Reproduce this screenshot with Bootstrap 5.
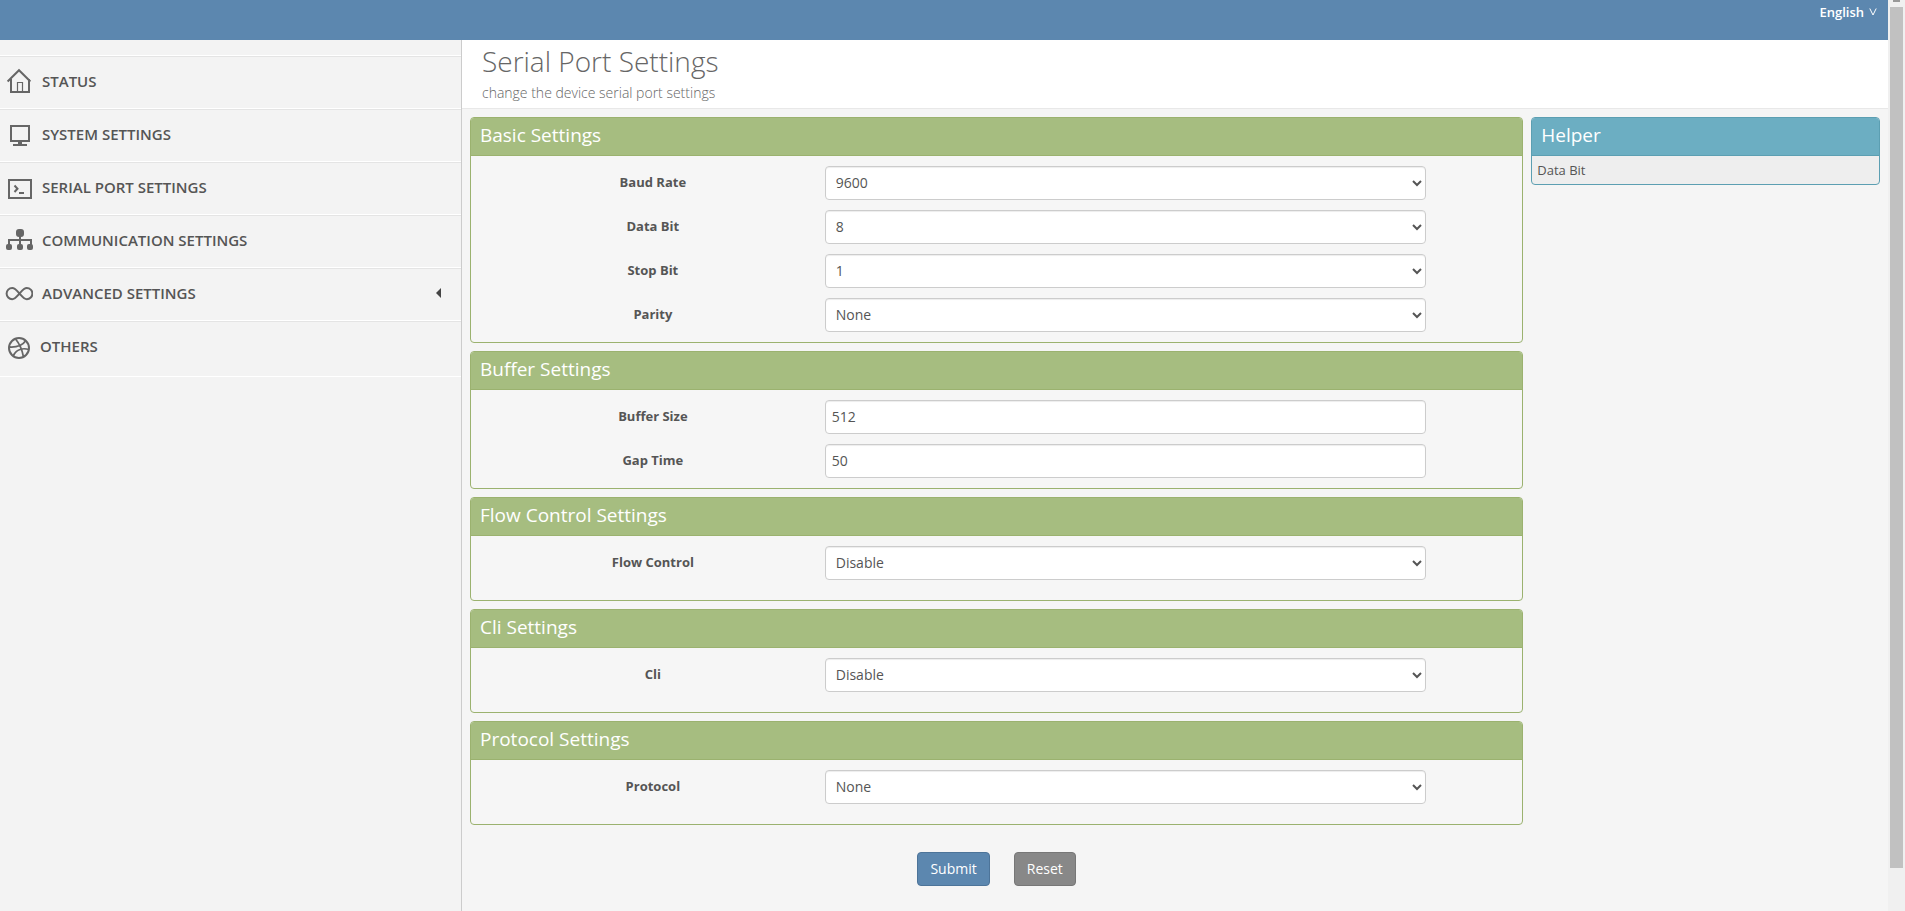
<!DOCTYPE html>
<html lang="en">
<head>
<meta charset="utf-8">
<meta name="viewport" content="width=device-width, initial-scale=1">
<title>Serial Port Settings</title>
<link href="https://cdn.jsdelivr.net/npm/bootstrap@5.3.0/dist/css/bootstrap.min.css" rel="stylesheet">
<style>
body { font-family: "Open Sans", "Noto Sans", sans-serif; font-size: 14px; line-height: 20px; color: #555; background: #f5f5f5; }
.topbar { background: #5c87af; height: 40px; padding: 2px 11px; }
.lang { color: #fff; font-size: 13px; font-weight: 600; gap: 5px; }
.sidebar { width: 24.47%; background: #f3f3f3; border-right: 1px solid #ccc; padding-top: 15px; }
.sidebar ul { border-top: 1px solid #fff; }
.side-link { height: 53px; padding: 0 20px 3px 5px; gap: 9px; border-top: 1px solid #e4e4e4; border-bottom: 1px solid #fff; color: #555; font-weight: 600; font-size: 15px; text-transform: uppercase; }
.side-link svg { width: 28px; height: 28px; flex: none; color: #666; }
.side-link.tall { height: 56px; padding-bottom: 6px; gap: 7px; }
.side-link .caret { width: 5px; height: 10px; }
.page-head { background: #fff; border-bottom: 1px solid #e8e8e8; height: 69px; padding: 0 20px; }
.page-head h1 { font-size: 28px; line-height: 43px; font-weight: 300; color: #666; margin: 0; }
.page-head p { font-size: 14px; line-height: 20px; font-weight: 300; color: #666; margin: 0; }
.main-wrap { padding: 8px; gap: 8px; }
.forms { width: 74.7%; }
.panel { border: 1px solid #9bb26f; border-radius: 4px; background: #f6f6f6; margin-bottom: 8px; overflow: hidden; }
.panel-title { font-size: 19px; line-height: 24px; font-weight: 400; color: #fff; background: #a6bd80; border-bottom: 1px solid #9bb26f; margin: 0; padding: 5px 9px 8px; }
.panel-fields { padding: 10px 10px 0; }
.panel-fields.roomy { padding-bottom: 10px; }
.field-row { margin-bottom: 10px; }
.field-row label { font-weight: 700; font-size: 13px; line-height: 32px; }
.field-box { display: block; width: 100%; height: 34px; padding: 5px 6px 7px; font-size: 14px; line-height: 20px; color: #555; background-color: #fff; border: 1px solid #ccc; border-radius: 4px; box-shadow: inset 0 1px 1px rgba(0,0,0,.075); }
.helper { border-color: #5c9fb2; background: #eee; }
.helper .panel-title { background: #6caec2; border-color: #5c9fb2; }
.helper p { margin: 0; padding: 4px 5px; font-size: 13px; }
.actions { gap: 24px; padding-top: 19px; }
.actions .btn { font-size: 14px; line-height: 20px; padding: 6px 12px; border-radius: 4px; color: #fff; }
.btn-send { background: #5c87af; border-color: #4d7499; }
.btn-clear { background: #888; border-color: #777; }
.scroll-track { width: 17px; background: #f0f0f0; }
.scroll-track i { width: 7px; height: 2px; background: #999; margin-bottom: 5px; }
.scroll-track b { width: 13px; height: 94.5%; background: #c1c1c1; }
</style>
</head>
<body>
<div class="d-flex min-vh-100">
  <div class="d-flex flex-column flex-grow-1">
    <header class="topbar d-flex justify-content-end align-items-start">
      <a href="#" class="lang d-flex align-items-center text-decoration-none">English
        <svg width="8" height="8" viewBox="0 0 8 8" fill="none" stroke="#fff" aria-hidden="true"><path d="M.8 .5 4 7 7.2 .5"/></svg>
      </a>
    </header>
    <div class="d-flex flex-grow-1">
      <nav class="sidebar flex-shrink-0">
        <ul class="list-unstyled m-0">
          <li><a href="#" class="side-link d-flex align-items-center text-decoration-none">
            <svg viewBox="0 0 28 28" fill="none" stroke="currentColor" stroke-width="2"><path d="M2.600 14.500 14 3.200 25.400 14.500M6 12V25H24V12"/><path stroke-width="1.200" d="M12.500 25V15.500H17.500V25"/></svg>
            Status</a></li>
          <li><a href="#" class="side-link d-flex align-items-center text-decoration-none">
            <svg viewBox="0 0 28 28" fill="none" stroke="currentColor" stroke-width="2"><path d="M6 6H24V21H6ZM8 25H22"/><path stroke-width="4" d="M15 21V25"/></svg>
            System Settings</a></li>
          <li><a href="#" class="side-link d-flex align-items-center text-decoration-none">
            <svg viewBox="0 0 28 28" fill="none" stroke="currentColor" stroke-width="2"><path d="M4 7H26V25H4ZM9.500 12.500 12.500 15.700 9.500 19M14 20H19"/></svg>
            Serial Port Settings</a></li>
          <li><a href="#" class="side-link d-flex align-items-center text-decoration-none">
            <svg viewBox="0 0 28 28" fill="currentColor"><rect x="11" y="3" width="8" height="8" rx="3"/><rect x="1" y="18" width="6" height="6" rx="2"/><rect x="12" y="18" width="6" height="6" rx="2"/><rect x="22" y="18" width="6" height="6" rx="2"/><path d="M15 10V19M4 19V14H26V19" fill="none" stroke="currentColor" stroke-width="2"/></svg>
            Communication Settings</a></li>
          <li><a href="#" class="side-link d-flex align-items-center text-decoration-none">
            <svg viewBox="0 0 28 28" fill="none" stroke="currentColor" stroke-width="2"><path d="M14.500 14.500C11.500 11 10 9 7.200 9A5.600 5.600 0 0 0 7.200 20.200C10 20.200 11.500 18 14.500 14.500S19 9 21.800 9A5.600 5.600 0 0 1 21.800 20.200C19 20.200 17.500 18 14.500 14.500Z"/></svg>
            <span class="flex-grow-1">Advanced Settings</span>
            <svg class="caret" viewBox="0 0 5 10" fill="#444"><path d="M5 0V10L0 5Z"/></svg></a></li>
          <li><a href="#" class="side-link tall d-flex align-items-center text-decoration-none">
            <svg viewBox="0 0 28 28" fill="none" stroke="currentColor" stroke-width="2"><circle cx="14" cy="16" r="10"/><path stroke-width="1.800" d="M10.500 7C14 11 17 17 18.500 25M4 15C11 15.500 17 14 20.500 9M8 24C11 18 17 15.500 24 17.500"/></svg>
            Others</a></li>
        </ul>
      </nav>
      <main class="flex-grow-1">
        <div class="page-head">
          <h1>Serial Port Settings</h1>
          <p>change the device serial port settings</p>
        </div>
        <div class="main-wrap d-flex align-items-start">
          <form class="forms" onsubmit="return false">
            <section class="panel">
              <h2 class="panel-title">Basic Settings</h2>
              <div class="panel-fields">
                <div class="field-row row g-0"><label for="baud" class="col-4 text-center">Baud Rate</label><div class="col-7"><select id="baud" class="field-box"><option>9600</option></select></div></div>
                <div class="field-row row g-0"><label for="databit" class="col-4 text-center">Data Bit</label><div class="col-7"><select id="databit" class="field-box"><option>8</option></select></div></div>
                <div class="field-row row g-0"><label for="stopbit" class="col-4 text-center">Stop Bit</label><div class="col-7"><select id="stopbit" class="field-box"><option>1</option></select></div></div>
                <div class="field-row row g-0"><label for="parity" class="col-4 text-center">Parity</label><div class="col-7"><select id="parity" class="field-box"><option>None</option></select></div></div>
              </div>
            </section>
            <section class="panel">
              <h2 class="panel-title">Buffer Settings</h2>
              <div class="panel-fields">
                <div class="field-row row g-0"><label for="buffer" class="col-4 text-center">Buffer Size</label><div class="col-7"><input id="buffer" type="text" class="field-box" value="512"></div></div>
                <div class="field-row row g-0"><label for="gap" class="col-4 text-center">Gap Time</label><div class="col-7"><input id="gap" type="text" class="field-box" value="50"></div></div>
              </div>
            </section>
            <section class="panel">
              <h2 class="panel-title">Flow Control Settings</h2>
              <div class="panel-fields roomy">
                <div class="field-row row g-0"><label for="flow" class="col-4 text-center">Flow Control</label><div class="col-7"><select id="flow" class="field-box"><option>Disable</option></select></div></div>
              </div>
            </section>
            <section class="panel">
              <h2 class="panel-title">Cli Settings</h2>
              <div class="panel-fields roomy">
                <div class="field-row row g-0"><label for="cli" class="col-4 text-center">Cli</label><div class="col-7"><select id="cli" class="field-box"><option>Disable</option></select></div></div>
              </div>
            </section>
            <section class="panel">
              <h2 class="panel-title">Protocol Settings</h2>
              <div class="panel-fields roomy">
                <div class="field-row row g-0"><label for="protocol" class="col-4 text-center">Protocol</label><div class="col-7"><select id="protocol" class="field-box"><option>None</option></select></div></div>
              </div>
            </section>
            <div class="actions d-flex justify-content-center">
              <button type="submit" class="btn btn-send">Submit</button>
              <button type="reset" class="btn btn-clear">Reset</button>
            </div>
          </form>
          <aside class="panel helper flex-grow-1">
            <h2 class="panel-title">Helper</h2>
            <p>Data Bit</p>
          </aside>
        </div>
      </main>
    </div>
  </div>
  <div class="scroll-track d-flex flex-column align-items-center flex-shrink-0 vh-100" aria-hidden="true"><i></i><b></b></div>
</div>
<script src="https://cdn.jsdelivr.net/npm/bootstrap@5.3.0/dist/js/bootstrap.bundle.min.js"></script>
</body>
</html>
